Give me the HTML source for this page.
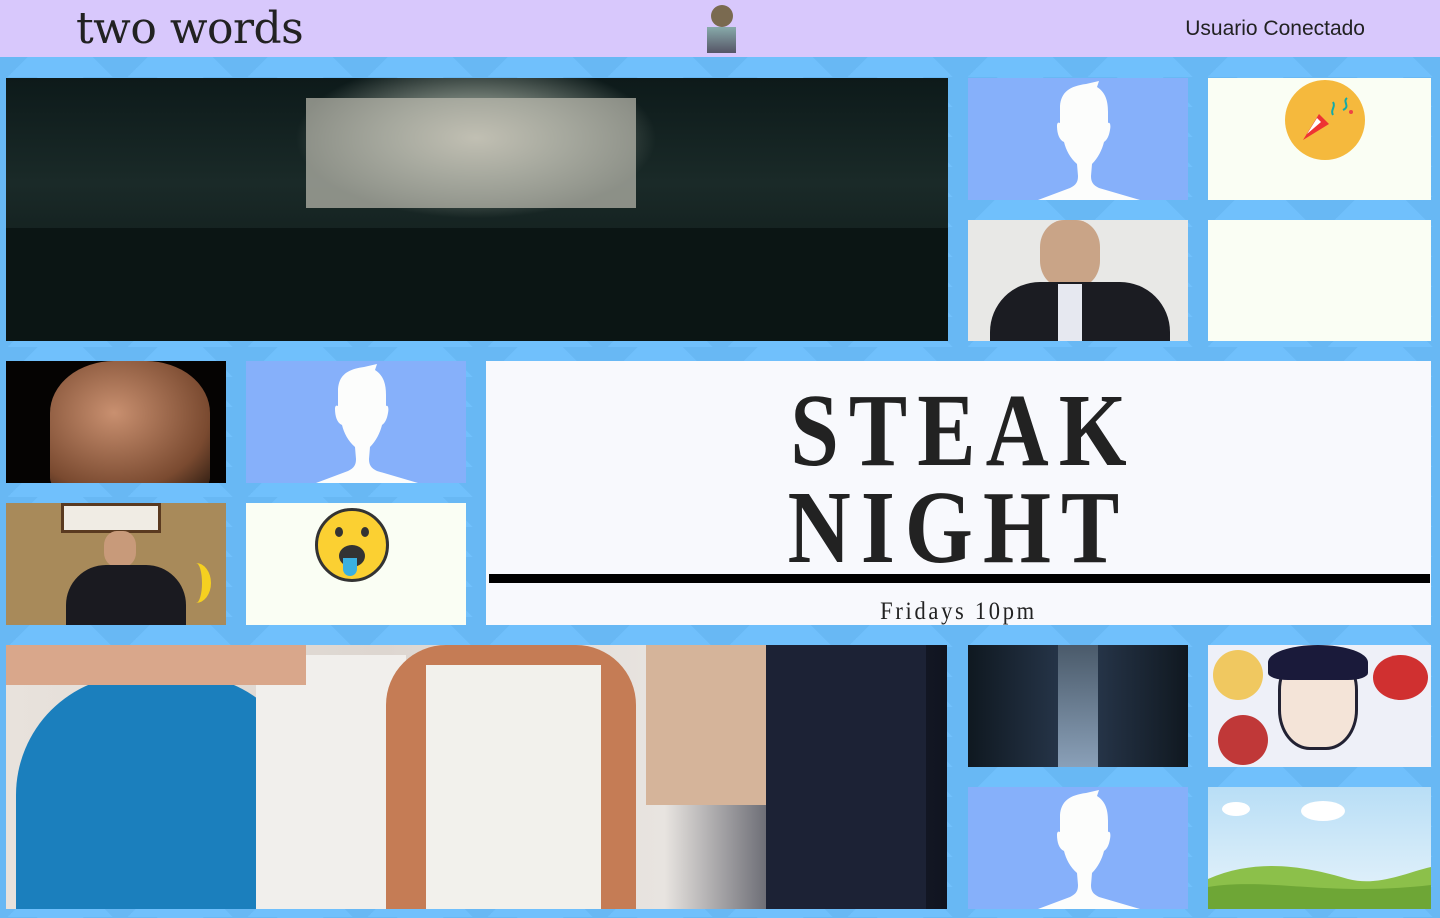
<!DOCTYPE html>
<html><head><meta charset="utf-8"><style>
*{margin:0;padding:0;box-sizing:border-box}
body{width:1440px;height:918px;overflow:hidden;background:#70c0fc;position:relative;font-family:"Liberation Sans",sans-serif}
.bgz{position:absolute;left:0;top:57px;width:1440px;height:861px;
background-image:linear-gradient(135deg,#62b2ee 25%,transparent 25%),linear-gradient(225deg,#62b2ee 25%,transparent 25%);
background-size:120px 30px;background-position:0 -10px;opacity:.55}
header{position:absolute;left:0;top:0;width:1440px;height:57px;background:#d8c8fc}
.logo{position:absolute;left:76px;top:3px;font-family:"DejaVu Serif",serif;font-size:44px;color:#222;letter-spacing:-0.5px}
.user{position:absolute;right:75px;top:17px;font-size:21px;color:#222}
.t{position:absolute;overflow:hidden}
.av{background:#86b0fa}
.cr{background:#fafef4}
</style></head><body>
<div class="bgz"></div>
<header>
<div class="logo">two words</div>
<div style="position:absolute;left:707px;top:5px;width:29px;height:48px;">
<div style="position:absolute;left:4px;top:0;width:22px;height:22px;border-radius:50%;background:#7a6a50"></div>
<div style="position:absolute;left:0;top:22px;width:29px;height:26px;background:linear-gradient(#8aa,#556)"></div>
</div>
<div class="user">Usuario Conectado</div>
</header>

<svg width="0" height="0" style="position:absolute"><defs>
<symbol id="sil" viewBox="0 0 220 122"><path fill="#fcfdfc" d="M70 122 L102 110 C108 107 110 104 110 98 L109 86 C102 80 98 72 96 64 C91 62 89 55 89 48 C89 45 90 44 92 45 L92 28 C93 14 102 8 118 6 L131 3 L129 9 C137 14 140 22 140 34 L140 45 C142 44 143 47 142 52 C141 58 139 62 136 64 C134 72 130 80 124 86 L123 98 C123 104 125 107 131 110 L172 122 Z"/></symbol>
</defs></svg>

<!-- row 1 -->
<div class="t" style="left:6px;top:78px;width:942px;height:263px;background:radial-gradient(ellipse 180px 80px at 470px 60px,#c9c7b8 0%,#6f7a72 50%,transparent 100%),linear-gradient(180deg,#0d1a1a 0%,#1a2a28 40%,#0a1212 100%)">
<div style="position:absolute;left:300px;top:20px;width:330px;height:110px;background:#bdbcb0;opacity:.7"></div>
<div style="position:absolute;left:0;top:150px;width:942px;height:113px;background:#0b1514"></div>
</div>
<div class="t av" style="left:968px;top:78px;width:220px;height:122px"><svg width="220" height="122"><use href="#sil"/></svg></div>
<div class="t cr" style="left:1208px;top:78px;width:223px;height:122px">
<div style="position:absolute;left:77px;top:2px;width:80px;height:80px;border-radius:50%;background:#f5b93d"></div>
<svg style="position:absolute;left:77px;top:2px" width="80" height="80"><path d="M18 60 L34 34 L44 44 Z" fill="#e33"/><path d="M22 54 L32 38 L36 42 Z" fill="#fff"/><path d="M48 22 c3 5 -3 8 0 13 M62 18 c-5 4 4 8 -4 12" stroke="#1aa" stroke-width="2" fill="none"/><circle cx="66" cy="32" r="2" fill="#e44"/></svg>
</div>
<div class="t" style="left:968px;top:220px;width:220px;height:121px;background:#e8e8e6">
<div style="position:absolute;left:72px;top:0;width:60px;height:68px;border-radius:40%;background:#c9a487"></div>
<div style="position:absolute;left:22px;top:62px;width:180px;height:70px;border-radius:50px 50px 0 0;background:#1b1c22"></div>
<div style="position:absolute;left:90px;top:64px;width:24px;height:58px;background:#e6e8f0"></div>
</div>
<div class="t cr" style="left:1208px;top:220px;width:223px;height:121px"></div>

<!-- row 2 -->
<div class="t" style="left:6px;top:361px;width:220px;height:122px;background:#050302">
<div style="position:absolute;left:44px;top:0;width:160px;height:130px;border-radius:40% 40% 10% 10%;background:radial-gradient(ellipse at 40% 40%,#c99070,#7a4a30 70%,#2a1a10)"></div>
</div>
<div class="t av" style="left:246px;top:361px;width:220px;height:122px"><svg width="220" height="122"><use href="#sil"/></svg></div>
<div class="t" style="left:6px;top:503px;width:220px;height:122px;background:#a88a5a">
<div style="position:absolute;left:55px;top:0;width:100px;height:30px;background:#f0ece4;border:3px solid #5a3a20"></div>
<div style="position:absolute;left:98px;top:28px;width:32px;height:36px;border-radius:40%;background:#c89a7a"></div>
<div style="position:absolute;left:60px;top:62px;width:120px;height:70px;border-radius:40px 40px 0 0;background:#1a1a20"></div>
<div style="position:absolute;left:175px;top:60px;width:30px;height:40px;border-radius:50%;border-right:9px solid #f5d020"></div>
</div>
<div class="t cr" style="left:246px;top:503px;width:220px;height:122px">
<div style="position:absolute;left:69px;top:5px;width:74px;height:74px;border-radius:50%;background:#fbd032;border:3px solid #333"></div>
<div style="position:absolute;left:89px;top:24px;width:8px;height:10px;border-radius:50%;background:#333"></div>
<div style="position:absolute;left:115px;top:24px;width:8px;height:10px;border-radius:50%;background:#333"></div>
<div style="position:absolute;left:93px;top:42px;width:26px;height:22px;border-radius:50%;background:#333"></div>
<div style="position:absolute;left:97px;top:55px;width:14px;height:18px;border-radius:0 0 8px 8px;background:#3ab0e0"></div>
</div>
<div class="t" style="left:486px;top:361px;width:945px;height:264px;background:#f8f9fd">
<div style="position:absolute;left:0;top:21px;width:945px;text-align:center;font-family:'Liberation Serif',serif;font-weight:bold;font-size:104px;line-height:97px;letter-spacing:12px;text-indent:12px;color:#222;transform:scaleX(0.84)">STEAK<br>NIGHT</div>
<div style="position:absolute;left:3px;top:213px;width:941px;height:9px;background:#000"></div>
<div style="position:absolute;left:0;top:237px;width:945px;text-align:center;font-family:'Liberation Serif',serif;font-size:25px;letter-spacing:3px;color:#222;transform:scaleX(0.9)">Fridays 10pm</div>
</div>

<!-- row 3 -->
<div class="t" style="left:6px;top:645px;width:941px;height:264px;background:linear-gradient(90deg,#e8e2dc 0%,#ddd6d0 40%,#e8e4e0 70%,#1c2030 88%,#101420 100%)">
<div style="position:absolute;left:10px;top:30px;width:290px;height:240px;border-radius:120px 120px 0 0;background:#1b7fbd"></div>
<div style="position:absolute;left:250px;top:10px;width:150px;height:260px;background:#f1efec"></div>
<div style="position:absolute;left:380px;top:0;width:250px;height:270px;border-radius:60px 60px 0 0;background:#c57c55"></div>
<div style="position:absolute;left:420px;top:20px;width:175px;height:250px;background:#f2f1ec"></div>
<div style="position:absolute;left:640px;top:0;width:120px;height:160px;background:#d5b49a"></div>
<div style="position:absolute;left:760px;top:0;width:160px;height:270px;background:#1c2235"></div>
<div style="position:absolute;left:0;top:0;width:300px;height:40px;background:#d9a78b"></div>
</div>
<div class="t" style="left:968px;top:645px;width:220px;height:122px;background:linear-gradient(90deg,#0f1820,#2a3a50 50%,#101820)">
<div style="position:absolute;left:90px;top:0;width:40px;height:122px;background:linear-gradient(#4a5a6a,#8aa0b8)"></div>
</div>
<div class="t" style="left:1208px;top:645px;width:223px;height:122px;background:#eef0f8">
<div style="position:absolute;left:70px;top:5px;width:80px;height:100px;border-radius:40%;background:#f4e4d8;border:3px solid #223"></div>
<div style="position:absolute;left:60px;top:0;width:100px;height:35px;border-radius:50% 50% 20% 20%;background:#1a1a3a"></div>
<div style="position:absolute;left:165px;top:10px;width:55px;height:45px;border-radius:50%;background:#d03030"></div>
<div style="position:absolute;left:5px;top:5px;width:50px;height:50px;border-radius:50%;background:#f0c860"></div>
<div style="position:absolute;left:10px;top:70px;width:50px;height:50px;border-radius:50%;background:#c03838"></div>
</div>
<div class="t av" style="left:968px;top:787px;width:220px;height:122px"><svg width="220" height="122"><use href="#sil"/></svg></div>
<div class="t" style="left:1208px;top:787px;width:223px;height:122px;background:linear-gradient(#b8def6,#e8f4fb)">
<svg width="223" height="122" style="position:absolute;left:0;top:0">
<ellipse cx="115" cy="24" rx="22" ry="10" fill="#fff"/><ellipse cx="28" cy="22" rx="14" ry="7" fill="#fff"/>
<path d="M0 92 C50 70 100 80 140 92 C170 100 200 85 223 80 L223 122 L0 122 Z" fill="#8cc04a"/>
<path d="M0 100 C60 90 120 110 223 98 L223 122 L0 122Z" fill="#6ea636"/>
</svg>
</div>
</body></html>
